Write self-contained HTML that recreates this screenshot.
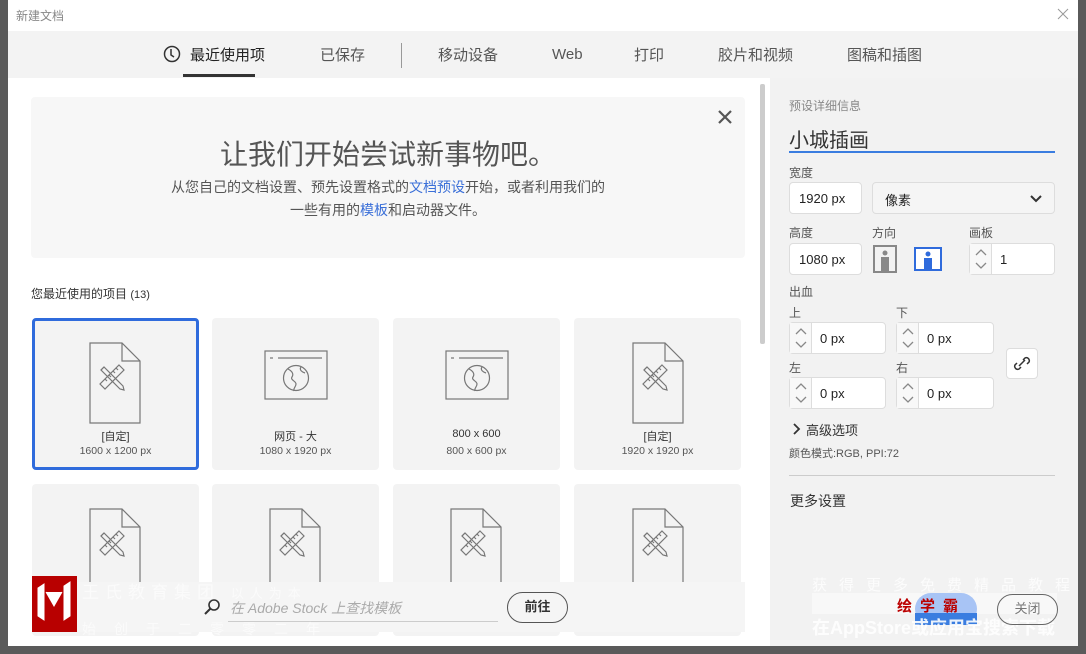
<!DOCTYPE html>
<html><head><meta charset="utf-8"><style>
*{box-sizing:border-box;margin:0;padding:0}
body{width:1086px;height:654px;background:#5a5a5a;position:relative;overflow:hidden;font-family:"Liberation Sans","Noto Sans CJK SC",sans-serif;color:#444}
.a{position:absolute}
.dlg{left:8px;top:0;width:1070px;height:646px;background:#fff}
.card{position:absolute;width:167px;height:152px;background:#f3f3f3;border-radius:4px;text-align:center;font-size:11px;color:#555}
.card .n{position:absolute;top:110px;left:0;right:0;color:#333}
.card .s{position:absolute;top:127px;left:0;right:0;font-size:10.5px}
.inp{position:absolute;background:#fff;border:1px solid #ddd;border-radius:4px;font-size:13px;color:#222}
.lbl{position:absolute;font-size:12px;color:#555}
.spin{position:absolute;left:0;top:0;bottom:0;width:22px;border-right:1px solid #ddd;background:#f8f8f8}
</style></head><body>
<div class="a dlg"></div>
<div class="a" style="left:16px;top:7px;font-size:12px;color:#888">新建文档</div>
<svg class="a" style="left:1057px;top:8px" width="12" height="12"><path d="M1 1l10 10M11 1L1 11" stroke="#999" stroke-width="1"/></svg>
<!-- tabs -->
<div class="a" style="left:8px;top:31px;width:1070px;height:47px;background:#f3f3f3"></div>
<svg class="a" style="left:163px;top:45px" width="18" height="18"><circle cx="9" cy="9" r="7.5" fill="none" stroke="#333" stroke-width="1.5"/><path d="M8 4v6l3 2" fill="none" stroke="#333" stroke-width="1.5"/></svg>
<div class="a" style="left:190px;top:44px;font-size:15px;color:#222">最近使用项</div>
<div class="a" style="left:183px;top:74px;width:72px;height:3px;background:#333"></div>
<div class="a" style="left:320px;top:44px;font-size:15px;color:#555">已保存</div>
<div class="a" style="left:401px;top:43px;width:1px;height:25px;background:#999"></div>
<div class="a" style="left:438px;top:44px;font-size:15px;color:#555">移动设备</div>
<div class="a" style="left:552px;top:46px;font-size:15px;color:#555">Web</div>
<div class="a" style="left:634px;top:44px;font-size:15px;color:#555">打印</div>
<div class="a" style="left:718px;top:44px;font-size:15px;color:#555">胶片和视频</div>
<div class="a" style="left:847px;top:44px;font-size:15px;color:#555">图稿和插图</div>
<!-- banner -->
<div class="a" style="left:31px;top:97px;width:714px;height:161px;background:#f7f7f7;border-radius:4px"></div>
<svg class="a" style="left:718px;top:110px" width="14" height="14"><path d="M1 1l12 12M13 1L1 13" stroke="#555" stroke-width="2.2"/></svg>
<div class="a" style="left:31px;top:133px;width:714px;text-align:center;font-size:28px;color:#555">让我们开始尝试新事物吧。</div>
<div class="a" style="left:31px;top:176px;width:714px;text-align:center;font-size:14px;line-height:23px;color:#555">从您自己的文档设置、预先设置格式的<span style="color:#3a6fd8">文档预设</span>开始，或者利用我们的<br>一些有用的<span style="color:#3a6fd8">模板</span>和启动器文件。</div>
<div class="a" style="left:31px;top:285px;font-size:12px;color:#333">您最近使用的项目 <span style="font-size:11px">(13)</span></div>
<!-- scrollbar -->
<div class="a" style="left:760px;top:84px;width:5px;height:260px;background:#ccc;border-radius:2px"></div>
<!-- cards -->
<div class="card" style="left:32px;top:318px;border:3px solid #2f6bdc"><div class="n" style="top:107px">[自定]</div><div class="s" style="top:124px">1600 x 1200 px</div></div>
<div class="card" style="left:212px;top:318px"><div class="n">网页 - 大</div><div class="s">1080 x 1920 px</div></div>
<div class="card" style="left:393px;top:318px"><div class="n">800 x 600</div><div class="s">800 x 600 px</div></div>
<div class="card" style="left:574px;top:318px"><div class="n">[自定]</div><div class="s">1920 x 1920 px</div></div>
<div class="card" style="left:32px;top:484px"></div>
<div class="card" style="left:212px;top:484px"></div>
<div class="card" style="left:393px;top:484px"></div>
<div class="card" style="left:574px;top:484px"></div>
<svg class="a" style="left:0;top:0" width="770" height="654">
<defs>
<g id="doc" fill="none" stroke="#777" stroke-width="1.2"><path d="M0 0h32l18 18v62H0z"/><path d="M32 0v18h18"/>
<path d="M29 22l5 5-19 19-5-5z"/><path d="M23 28l2 2M19 32l2 2M15 36l2 2M26 25l2 2"/>
<path d="M14 24l-3 3 19 19 4 1-1-4z"/><path d="M11 27l3-3"/></g>
<g id="web" fill="none" stroke="#777" stroke-width="1.2"><rect x="0" y="0" width="62" height="48"/><path d="M5 7h3M13 7h44"/><circle cx="31" cy="27" r="12.5"/><path d="M23 18c4 2 6 5 4 8s4 4 4 7-3 4-2 7M36 16c-2 3 1 5 4 6"/></g>
</defs>
<use href="#doc" x="90" y="343"/><use href="#web" x="265" y="351"/><use href="#web" x="446" y="351"/><use href="#doc" x="633" y="343"/>
<use href="#doc" x="90" y="509"/><use href="#doc" x="270" y="509"/><use href="#doc" x="451" y="509"/><use href="#doc" x="633" y="509"/>
</svg>
<!-- search bar -->
<div class="a" style="left:32px;top:582px;width:713px;height:50px;background:#f5f5f5"></div>
<svg class="a" style="left:203px;top:598px" width="18" height="18"><circle cx="11" cy="7" r="5" fill="none" stroke="#333" stroke-width="1.6"/><path d="M7.5 10.5L2 16" stroke="#333" stroke-width="2"/></svg>
<div class="a" style="left:230px;top:598px;font-size:14px;color:#aaa;font-style:italic">在 Adobe Stock 上查找模板</div>
<div class="a" style="left:228px;top:621px;width:270px;height:1px;background:#ccc"></div>
<div class="a" style="left:507px;top:592px;width:61px;height:31px;border:1.5px solid #555;border-radius:16px;text-align:center;line-height:28px;font-size:13px;color:#333;font-weight:bold">前往</div>
<!-- watermark -->
<div class="a" style="left:32px;top:576px;width:45px;height:56px;background:#b80000"></div>
<svg class="a" style="left:34px;top:580px" width="40" height="48"><path d="M4 8l6 -4v36l-6 -4zM12 12l8 14 8-14M30 6l6-4v34l-6 4z" fill="#fff" stroke="#fff"/></svg>
<div class="a" style="left:82px;top:578px;font-size:17px;color:#fff;opacity:.6;letter-spacing:6px">王氏教育集团 <span style="font-size:13px">以人为本</span></div>
<div class="a" style="left:82px;top:619px;font-size:14px;color:#fff;opacity:.6;letter-spacing:18px">始创于二零零二年</div>
<!-- right panel -->
<div class="a" style="left:770px;top:78px;width:308px;height:568px;background:#f2f2f2"></div>
<div class="a" style="left:789px;top:97px;font-size:12px;color:#888">预设详细信息</div>
<div class="a" style="left:789px;top:124px;font-size:20px;color:#333">小城插画</div>
<div class="a" style="left:789px;top:151px;width:266px;height:2px;background:#3a7de0"></div>
<div class="lbl" style="left:789px;top:164px">宽度</div>
<div class="inp" style="left:789px;top:182px;width:73px;height:32px;padding:8px 9px">1920 px</div>
<div class="inp" style="left:872px;top:182px;width:183px;height:32px;padding:7px 12px;background:#f5f5f5">像素<svg style="position:absolute;right:12px;top:12px" width="12" height="8"><path d="M1 1l5 5 5-5" fill="none" stroke="#333" stroke-width="2"/></svg></div>
<div class="lbl" style="left:789px;top:224px">高度</div>
<div class="lbl" style="left:872px;top:224px">方向</div>
<div class="lbl" style="left:969px;top:224px">画板</div>
<div class="inp" style="left:789px;top:243px;width:73px;height:32px;padding:8px 9px">1080 px</div>
<svg class="a" style="left:873px;top:245px" width="24" height="28"><rect x="1" y="1" width="22" height="26" fill="#f2f2f2" stroke="#888" stroke-width="2"/><circle cx="12" cy="8" r="2.5" fill="#888"/><rect x="8" y="12" width="8" height="14" fill="#888"/></svg>
<svg class="a" style="left:914px;top:247px" width="28" height="24"><rect x="1" y="1" width="26" height="22" fill="#fff" stroke="#2f6bdc" stroke-width="2"/><circle cx="14" cy="7" r="2.5" fill="#2f6bdc"/><rect x="10" y="11" width="8" height="11" fill="#2f6bdc"/></svg>
<div class="inp" style="left:969px;top:243px;width:86px;height:32px;padding:8px 0 0 30px"><div class="spin"><svg width="22" height="30"><path d="M6 11l5-5 5 5M6 19l5 5 5-5" fill="none" stroke="#888" stroke-width="1.3"/></svg></div>1</div>
<div class="lbl" style="left:789px;top:283px">出血</div>
<div class="lbl" style="left:789px;top:304px">上</div>
<div class="lbl" style="left:896px;top:304px">下</div>
<div class="lbl" style="left:789px;top:359px">左</div>
<div class="lbl" style="left:896px;top:359px">右</div>
<div class="inp" style="left:789px;top:322px;width:97px;height:32px;padding:8px 0 0 30px"><div class="spin"><svg width="22" height="30"><path d="M6 11l5-5 5 5M6 19l5 5 5-5" fill="none" stroke="#888" stroke-width="1.3"/></svg></div>0 px</div>
<div class="inp" style="left:896px;top:322px;width:98px;height:32px;padding:8px 0 0 30px"><div class="spin"><svg width="22" height="30"><path d="M6 11l5-5 5 5M6 19l5 5 5-5" fill="none" stroke="#888" stroke-width="1.3"/></svg></div>0 px</div>
<div class="inp" style="left:789px;top:377px;width:97px;height:32px;padding:8px 0 0 30px"><div class="spin"><svg width="22" height="30"><path d="M6 11l5-5 5 5M6 19l5 5 5-5" fill="none" stroke="#888" stroke-width="1.3"/></svg></div>0 px</div>
<div class="inp" style="left:896px;top:377px;width:98px;height:32px;padding:8px 0 0 30px"><div class="spin"><svg width="22" height="30"><path d="M6 11l5-5 5 5M6 19l5 5 5-5" fill="none" stroke="#888" stroke-width="1.3"/></svg></div>0 px</div>
<div class="inp" style="left:1006px;top:348px;width:32px;height:31px"><svg width="30" height="29"><path d="M12 17l6-6M10 14l-2 2a3 3 0 004 4l2-2M20 15l2-2a3 3 0 00-4-4l-2 2" fill="none" stroke="#333" stroke-width="1.5"/></svg></div>
<svg class="a" style="left:792px;top:422px" width="10" height="14"><path d="M2 2l5 5-5 5" fill="none" stroke="#333" stroke-width="1.8"/></svg>
<div class="a" style="left:806px;top:420px;font-size:13px;color:#333">高级选项</div>
<div class="a" style="left:789px;top:445px;font-size:11px;color:#555">颜色模式:RGB, PPI:72</div>
<div class="a" style="left:789px;top:475px;width:266px;height:1px;background:#ccc"></div>
<div class="a" style="left:790px;top:491px;font-size:14px;color:#333">更多设置</div>
<!-- bottom right -->
<div class="a" style="left:812px;top:574px;font-size:15px;color:#fff;opacity:.8;letter-spacing:12px">获得更多免费精品教程</div>
<div class="a" style="left:812px;top:593px;width:245px;height:21px;background:#f8f8f8"></div>
<div class="a" style="left:915px;top:593px;width:62px;height:32px;background:#a8c4f5;border-radius:16px"></div>
<div class="a" style="left:915px;top:613px;width:62px;height:12px;background:#3a7de0"></div>
<div class="a" style="left:897px;top:595px;font-size:15px;font-weight:bold;color:#b00;letter-spacing:8px">绘学霸</div>
<div class="a" style="left:812px;top:614px;font-size:18px;font-weight:bold;color:#fff;opacity:.9">在AppStore或应用宝搜索下载</div>
<div class="a" style="left:997px;top:594px;width:61px;height:31px;border:1.5px solid #666;border-radius:16px;text-align:center;line-height:28px;font-size:13px;color:#777">关闭</div>
</body></html>
